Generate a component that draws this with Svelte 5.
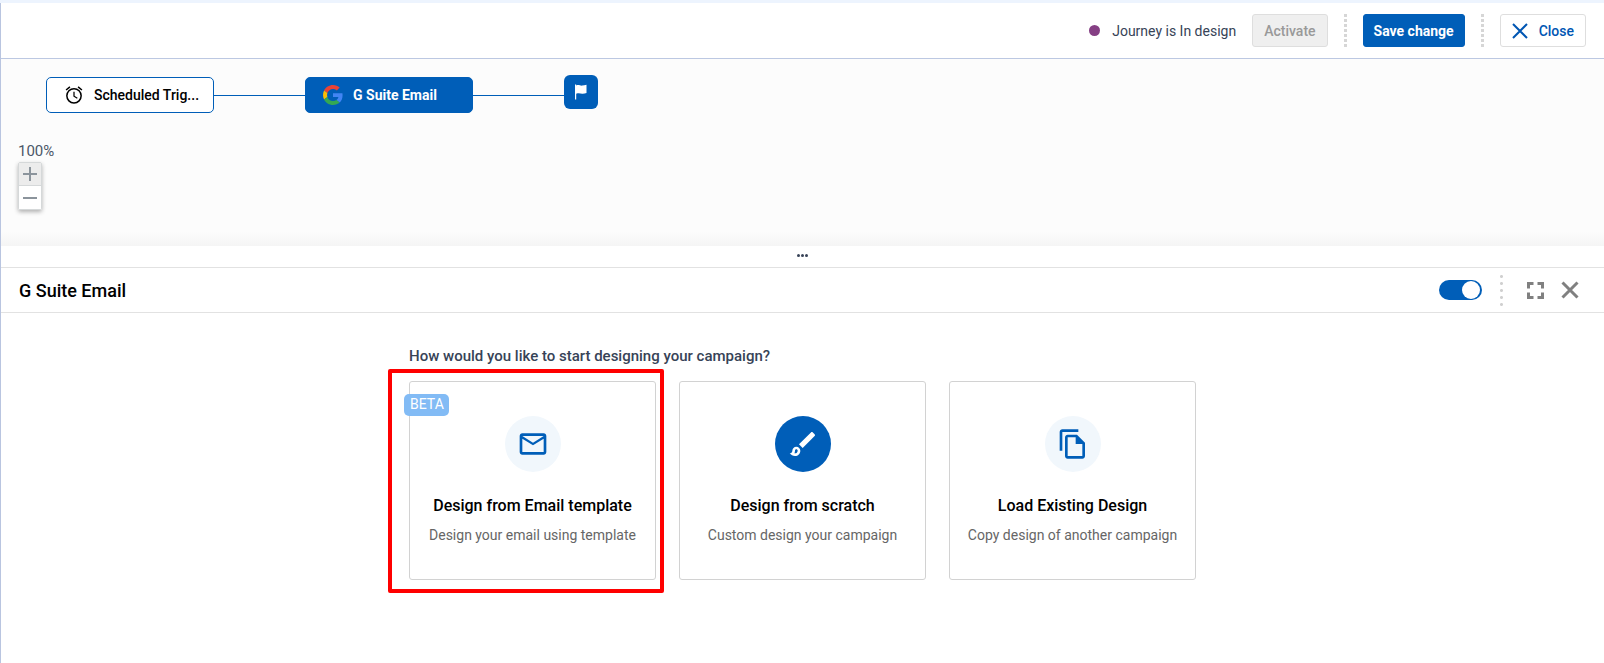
<script>
  let enabled = $state(true);
  let zoom = $state(100);

  const options = [
    { id: 'template', title: 'Design from Email template', text: 'Design your email using template', beta: true, highlighted: true },
    { id: 'scratch', title: 'Design from scratch', text: 'Custom design your campaign', filled: true },
    { id: 'existing', title: 'Load Existing Design', text: 'Copy design of another campaign' }
  ];

  const icons = {
    template: 'M22 6c0-1.1-.9-2-2-2H4c-1.1 0-2 .9-2 2v12c0 1.1.9 2 2 2h16c1.1 0 2-.9 2-2V6zm-2 0l-8 5-8-5h16zm0 12H4V8l8 5 8-5v10z',
    scratch: 'M7 16c.55 0 1 .45 1 1 0 1.1-.9 2-2 2-.17 0-.33-.02-.5-.05.31-.55.5-1.21.5-1.95 0-.55.45-1 1-1M18.67 3c-.26 0-.51.1-.71.29L9 12.25 11.75 15l8.96-8.96c.39-.39.39-1.02 0-1.41l-1.34-1.34c-.2-.2-.45-.29-.7-.29zM7 14c-1.66 0-3 1.34-3 3 0 1.31-1.16 2-2 2 .92 1.22 2.49 2 4 2 2.21 0 4-1.79 4-4 0-1.66-1.34-3-3-3z',
    existing: 'M16 1H4c-1.1 0-2 .9-2 2v14h2V3h12V1zM15 5H8c-1.1 0-1.99.9-1.99 2L6 21c0 1.1.89 2 1.99 2H19c1.1 0 2-.9 2-2V11l-6-6zM8 21V7h6v5h5v9H8z'
  };
</script>

<div class="app">
  <header class="topbar">
    <span class="status"><i class="dot"></i>Journey is In design</span>
    <button class="btn" disabled>Activate</button>
    <i class="divider"></i>
    <button class="btn primary">Save change</button>
    <i class="divider"></i>
    <button class="btn close">
      <svg width="16" height="16" viewBox="0 0 16 16" aria-hidden="true"><path d="M1 1l14 14M15 1L1 15" fill="none" stroke="currentColor" stroke-width="2" /></svg>
      Close
    </button>
  </header>

  <section class="canvas">
    <div class="flow">
      <button class="node">
        <svg width="20" height="20" viewBox="0 0 24 24" aria-hidden="true">
          <g fill="none" stroke="currentColor" stroke-width="1.8"><circle cx="12" cy="13" r="8.6" /><path d="M12 8v5.5l4 2.4" stroke-width="1.5" /><path d="M2.5 6l4.6-3.8M21.5 6l-4.6-3.8" /></g>
        </svg>
        <span>Scheduled Trig...</span>
      </button>
      <i class="link"></i>
      <button class="node active">
        <svg width="20" height="20" viewBox="0 0 48 48" aria-hidden="true">
          <path fill="#ea4335" d="M24 9.5c3.54 0 6.71 1.22 9.21 3.6l6.85-6.85C35.9 2.38 30.47 0 24 0 14.62 0 6.51 5.38 2.56 13.22l7.98 6.19C12.43 13.72 17.74 9.5 24 9.5z" />
          <path fill="#4285f4" d="M46.98 24.55c0-1.57-.15-3.09-.38-4.55H24v9.02h12.94c-.58 2.96-2.26 5.48-4.78 7.18l7.73 6c4.51-4.18 7.09-10.36 7.09-17.65z" />
          <path fill="#fbbc05" d="M10.53 28.59c-.48-1.45-.76-2.99-.76-4.59s.27-3.14.76-4.59l-7.98-6.19C.92 16.46 0 20.12 0 24c0 3.88.92 7.54 2.56 10.78l7.97-6.19z" />
          <path fill="#34a853" d="M24 48c6.48 0 11.93-2.13 15.89-5.81l-7.73-6c-2.15 1.45-4.92 2.3-8.16 2.3-6.26 0-11.57-4.22-13.47-9.91l-7.98 6.19C6.51 42.62 14.62 48 24 48z" />
        </svg>
        <span>G Suite Email</span>
      </button>
      <i class="link"></i>
      <button class="end" aria-label="End">
        <svg width="14" height="16" viewBox="0 0 14 16" aria-hidden="true"><path fill="#fff" d="M1 .5h1.2v.9c2.6-1.2 4 .6 6 .2 1.600-.1 2.700-.6 4.300-.8v8.200c-1.500.4-2.700.8-4.300.7-2-.3-3.600-1-6 0v5.800H1z" /></svg>
      </button>
    </div>
    <div class="zoom">
      <output>{zoom}%</output>
      <div class="zoom-buttons">
        <button aria-label="Zoom in" onclick={() => (zoom += 10)}><svg width="14" height="14" viewBox="0 0 14 14" aria-hidden="true"><path d="M0 7h14M7 0v14" stroke="currentColor" stroke-width="2" /></svg></button>
        <button aria-label="Zoom out" onclick={() => (zoom -= 10)}><svg width="14" height="14" viewBox="0 0 14 14" aria-hidden="true"><path d="M0 7h14" stroke="currentColor" stroke-width="2" /></svg></button>
      </div>
    </div>
  </section>

  <div class="splitter"><i></i><i></i><i></i></div>

  <section class="panel">
    <header class="panel-head">
      <h1>G Suite Email</h1>
      <input type="checkbox" role="switch" aria-label="Enabled" bind:checked={enabled} />
      <i class="divider round"></i>
      <div class="tools">
        <button aria-label="Full screen"><svg width="17" height="17" viewBox="0 0 17 17" aria-hidden="true"><path d="M1.500 6.500v-5h5M10.500 1.500h5v5M15.500 10.500v5h-5M6.500 15.500h-5v-5" fill="none" stroke="currentColor" stroke-width="3" /></svg></button>
        <button aria-label="Close panel"><svg width="18" height="18" viewBox="0 0 18 18" aria-hidden="true"><path d="M1.500 1.500l15 15M16.500 1.500l-15 15" fill="none" stroke="currentColor" stroke-width="3" /></svg></button>
      </div>
    </header>

    <div class="chooser">
      <h2>How would you like to start designing your campaign?</h2>
      <div class="cards">
        {#each options as option (option.id)}
          <button class="card" class:highlighted={option.highlighted}>
            {#if option.beta}<span class="badge">BETA</span>{/if}
            <span class="icon" class:filled={option.filled}>
              <svg viewBox="0 0 24 24" aria-hidden="true"><path fill="currentColor" d={icons[option.id]} /></svg>
            </span>
            <strong>{option.title}</strong>
            <span class="text">{option.text}</span>
          </button>
        {/each}
      </div>
    </div>
  </section>
</div>

<style>
  :global(body) {
    margin: 0;
    background: #fff;
  }

  .app {
    box-sizing: border-box;
    min-height: 100vh;
    border-top: 3px solid #edf4fe;
    box-shadow: inset 1px 0 #b9c5e0;
    padding-left: 1px;
    font-family: Roboto, "Liberation Sans", sans-serif;
    font-size: 14px;
    color: #374357;
  }

  button {
    font: inherit;
    color: inherit;
    margin: 0;
    padding: 0;
    border: 0;
    background: none;
    cursor: pointer;
  }

  svg {
    display: block;
    flex: none;
  }

  .topbar {
    display: flex;
    align-items: center;
    justify-content: flex-end;
    gap: 16px;
    height: 55px;
    padding-right: 18px;
    border-bottom: 1px solid #bcc8e2;
  }

  .status {
    display: flex;
    align-items: center;
    gap: 12px;
  }

  .dot {
    width: 11px;
    height: 11px;
    border-radius: 50%;
    background: #853f84;
  }

  .btn {
    display: flex;
    align-items: center;
    gap: 11px;
    box-sizing: border-box;
    height: 33px;
    padding: 0 11px;
    border: 1px solid #dedede;
    border-radius: 3px;
    font-weight: 500;
    background: #fff;
  }

  .btn:disabled {
    background: #efefef;
    color: #999;
    cursor: default;
  }

  .primary {
    padding: 0 10px;
    border-color: #005eb8;
    background: #005eb8;
    color: #fff;
    font-weight: 700;
  }

  .close {
    color: #0056b3;
  }

  .divider {
    width: 3px;
    height: 33px;
    background: repeating-linear-gradient(#d6d6d6 0 3px, transparent 3px 5px);
  }

  .divider.round {
    height: 35px;
    background: radial-gradient(circle, #d0d0d0 1px, transparent 2px) top / 3px 7px;
  }

  .canvas {
    box-sizing: border-box;
    height: 187px;
    padding: 16px 17px 0;
    background: linear-gradient(#fcfcfc calc(100% - 14px), #f5f5f5);
  }

  .flow {
    display: flex;
    align-items: center;
    height: 40px;
    padding-left: 28px;
    color: #000;
  }

  .node {
    display: flex;
    align-items: center;
    gap: 10px;
    box-sizing: border-box;
    width: 168px;
    height: 36px;
    padding: 0 17px;
    border: 1px solid #005eb8;
    border-radius: 5px;
    background: #fff;
    font-weight: 500;
    white-space: nowrap;
  }

  .node.active {
    background: #005eb8;
    color: #fff;
    font-weight: 700;
  }

  .link {
    width: 91px;
    height: 1px;
    background: #005eb8;
  }

  .end {
    display: grid;
    place-items: center;
    align-self: flex-start;
    width: 34px;
    height: 34px;
    border-radius: 6px;
    background: #005eb8;
  }

  .zoom {
    display: flex;
    flex-direction: column;
    align-items: flex-start;
    gap: 1px;
    padding-top: 27px;
  }

  .zoom output {
    font-size: 15px;
    line-height: 19px;
    color: #4b5768;
  }

  .zoom-buttons {
    border: 1px solid #d5d8d9;
    border-radius: 2px;
    box-shadow: 0 2px 4px rgba(0, 0, 0, 0.3);
  }

  .zoom-buttons button {
    display: grid;
    place-items: center;
    width: 22px;
    height: 23px;
    background: #fff;
    color: #8b949c;
  }

  .zoom-buttons button:first-child {
    background: #ececec;
    border-bottom: 1px solid #d5d8d9;
  }

  .splitter {
    display: flex;
    justify-content: center;
    align-items: center;
    gap: 1px;
    height: 18px;
    padding-bottom: 3px;
    border-bottom: 1px solid #e2e2e2;
    cursor: row-resize;
  }

  .splitter i {
    width: 3px;
    height: 3px;
    border-radius: 50%;
    background: #374357;
  }

  .panel-head {
    display: flex;
    align-items: center;
    height: 44px;
    padding: 0 25px 0 18px;
    border-bottom: 1px solid #e2e2e2;
  }

  h1 {
    margin: 0 auto 0 0;
    font-size: 18px;
    font-weight: 500;
    color: #000;
  }

  input {
    display: flex;
    appearance: none;
    width: 43px;
    height: 20px;
    margin: 0 18px 0 0;
    padding: 1px 2px;
    box-sizing: border-box;
    border-radius: 10px;
    background: #b5b5b5;
    cursor: pointer;
  }

  input::before {
    content: "";
    width: 18px;
    height: 18px;
    border-radius: 50%;
    background: #fff;
  }

  input:checked {
    justify-content: flex-end;
    background: #005eb8;
  }

  .tools {
    display: flex;
    align-items: center;
    gap: 17px;
    margin-left: 24px;
    color: #808080;
  }

  .chooser {
    width: fit-content;
    margin: 0 auto;
    padding: 32px 0;
  }

  h2 {
    margin: 0 0 14px;
    font-size: 15px;
    line-height: 22px;
    font-weight: 500;
    color: #374357;
  }

  .cards {
    display: flex;
    flex-wrap: wrap;
    gap: 23px;
  }

  .card {
    position: relative;
    display: flex;
    flex-direction: column;
    align-items: center;
    box-sizing: border-box;
    width: 247px;
    padding: 34px 8px;
    border: 1px solid #d2d2d2;
    border-radius: 3px;
    background: #fff;
  }

  .highlighted::after {
    content: "";
    position: absolute;
    inset: -13px -9px -14px -22px;
    border: 4px solid #f00;
    border-radius: 2px;
  }

  .badge {
    position: absolute;
    top: 12px;
    left: -6px;
    padding: 0 5px 2px 6px;
    border-radius: 5px;
    background: #82bbf5;
    color: #fff;
    line-height: 20px;
  }

  .icon {
    display: grid;
    place-items: center;
    width: 56px;
    height: 56px;
    border-radius: 50%;
    background: #f1f7fc;
    color: #005eb8;
  }

  .icon.filled {
    background: #005eb8;
    color: #fff;
  }

  .icon svg {
    width: 32px;
    height: 32px;
  }

  strong {
    margin-top: 23px;
    font-size: 16px;
    line-height: 22px;
    font-weight: 500;
    color: #000;
  }

  .text {
    margin-top: 8px;
    line-height: 20px;
    color: #666;
  }
</style>
